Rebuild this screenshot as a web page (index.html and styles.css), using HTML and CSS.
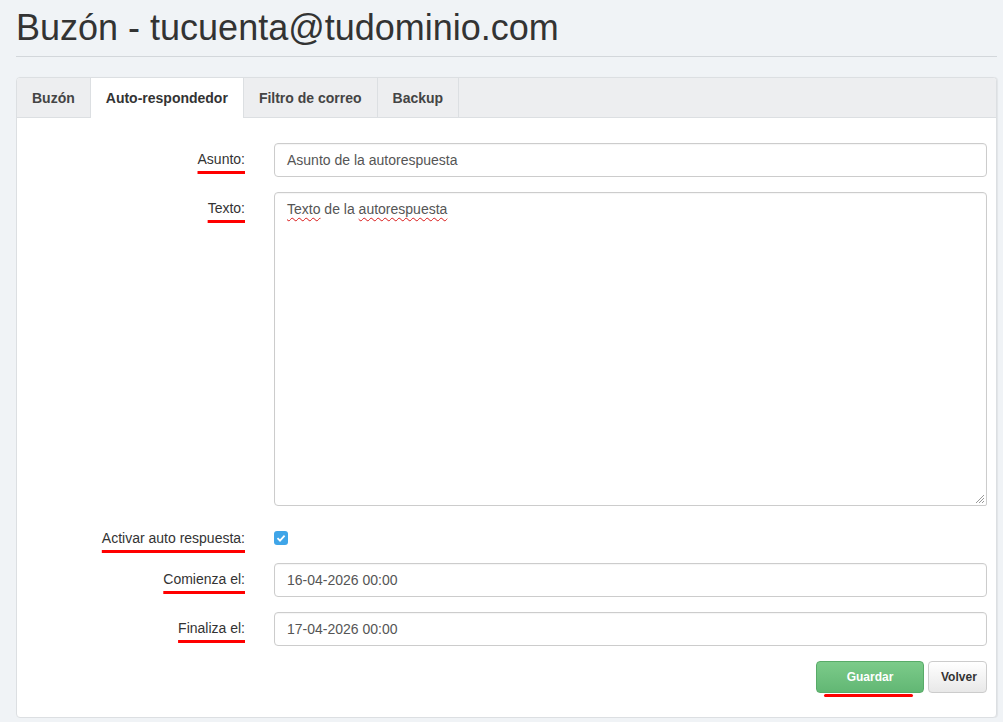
FILE: index.html
```html
<!DOCTYPE html>
<html lang="es">
<head>
    <meta charset="UTF-8">
    <meta name="viewport" content="width=device-width, initial-scale=1.0">
    <title>Buzón - tucuenta@tudominio.com</title>
    <link rel="stylesheet" href="styles.css">
</head>
<body>

    <h1 class="page-title">Buzón - tucuenta@tudominio.com</h1>

    <div class="panel">
        <!-- pestañas del buzón -->
        <div class="tabs">
            <div class="tab">Buzón</div>
            <div class="tab active">Auto-respondedor</div>
            <div class="tab">Filtro de correo</div>
            <div class="tab">Backup</div>
        </div>

        <div class="panel-body">
            <div class="form-row">
                <label class="form-label"><span class="mark">Asunto:</span></label>
                <div class="form-field">
                    <div class="input">Asunto de la autorespuesta</div>
                </div>
            </div>

            <div class="form-row">
                <label class="form-label"><span class="mark">Texto:</span></label>
                <div class="form-field">
                    <div class="input textarea">
                        <span class="typo">Texto</span> de la <span class="typo">autorespuesta</span>
                        <svg class="grip" width="10" height="10" viewBox="0 0 10 10">
                            <path d="M9 1L1 9M9 4L4 9M9 7L7 9" stroke="#999" stroke-width="1"/>
                        </svg>
                    </div>
                </div>
            </div>

            <div class="form-row row-check">
                <label class="form-label"><span class="mark wide">Activar auto respuesta:</span></label>
                <div class="form-field">
                    <span class="checkbox">
                        <svg width="10" height="10" viewBox="0 0 10 10">
                            <path d="M1.5 5.2L4 7.6L8.6 2.6" fill="none" stroke="#fff" stroke-width="1.8"/>
                        </svg>
                    </span>
                </div>
            </div>

            <div class="form-row">
                <label class="form-label"><span class="mark">Comienza el:</span></label>
                <div class="form-field">
                    <div class="input">16-04-2026 00:00</div>
                </div>
            </div>

            <div class="form-row">
                <label class="form-label"><span class="mark">Finaliza el:</span></label>
                <div class="form-field">
                    <div class="input">17-04-2026 00:00</div>
                </div>
            </div>

            <div class="actions">
                <button class="btn btn-save">Guardar</button>
                <button class="btn btn-back">Volver</button>
            </div>
        </div>
    </div>

</body>
</html>
```

FILE: styles.css
```css
body {
    margin: 0;
    padding: 0 6px 0 16px;
    background-color: #f0f3f6;
    font-family: "Liberation Sans", Arial, sans-serif;
    color: #333;
}
.page-title {
    margin: 0;
    padding: 9px 0 9px 0;
    font-size: 36px;
    font-weight: normal;
    line-height: 38px;
    color: #333;
    border-bottom: 1px solid #d3d7db;
}
.panel {
    margin-top: 20px;
    background-color: #fff;
    border: 1px solid #dcdfe2;
    border-radius: 4px;
    overflow: hidden;
    box-shadow: 1px 0 1px rgba(0, 0, 0, 0.06);
}
.tabs {
    display: flex;
    height: 39px;
    background-color: #edeef0;
    border-bottom: 1px solid #dcdfe2;
}
.tab {
    padding: 1px 15px 0 15px;
    line-height: 38px;
    font-size: 14px;
    font-weight: bold;
    color: #444;
    border-right: 1px solid #dcdfe2;
}
.tab.active {
    background-color: #fff;
    color: #333;
    height: 39px;
}
.panel-body {
    padding: 25px 9px 24px 0;
}
.form-row {
    display: flex;
    margin-bottom: 15px;
}
.form-label {
    width: 228px;
    flex-shrink: 0;
    text-align: right;
    padding-top: 8px;
    font-size: 14px;
    color: #333;
}
.mark {
    text-decoration: underline;
    text-decoration-color: #f00;
    text-decoration-thickness: 3px;
    text-underline-offset: 7px;
    text-decoration-skip-ink: none;
}
.form-field {
    flex: 1;
    margin-left: 29px;
}
.input {
    height: 32px;
    line-height: 32px;
    padding: 0 12px;
    border: 1px solid #ccc;
    border-radius: 4px;
    font-size: 14px;
    color: #555;
    box-shadow: inset 0 1px 1px rgba(0, 0, 0, 0.04);
}
.textarea {
    position: relative;
    height: 306px;
    line-height: 20px;
    padding-top: 6px;
    border-radius: 4px 4px 2px 4px;
}
.typo {
    text-decoration: underline wavy #d81818;
    text-decoration-thickness: 1px;
    text-underline-offset: 3px;
    text-decoration-skip-ink: none;
}
.grip {
    position: absolute;
    right: 1px;
    bottom: 1px;
}
.row-check {
    height: 27px;
    align-items: center;
}
.row-check .form-label {
    padding-top: 6px;
}
.checkbox {
    display: flex;
    align-items: center;
    justify-content: center;
    width: 14px;
    height: 14px;
    margin-top: 6px;
    background-color: #3fa5e8;
    border-radius: 3px;
}
.actions {
    display: flex;
    justify-content: flex-end;
    gap: 4px;
}
.btn {
    position: relative;
    height: 32px;
    padding: 0 12px;
    border-radius: 4px;
    font-family: "Liberation Sans", Arial, sans-serif;
    font-size: 12px;
    font-weight: bold;
}
.btn-save {
    width: 108px;
    color: #fff;
    background: linear-gradient(#7ccb8a, #62b774);
    border: 1px solid #58ab68;
}
.btn-save::after {
    content: "";
    position: absolute;
    left: 7px;
    right: 10px;
    bottom: -5px;
    height: 3px;
    border-radius: 2px;
    background-color: #f00;
}
.btn-back {
    width: 59px;
    color: #333;
    background: linear-gradient(#fff, #e8e8e8);
    border: 1px solid #ccc;
}
```
